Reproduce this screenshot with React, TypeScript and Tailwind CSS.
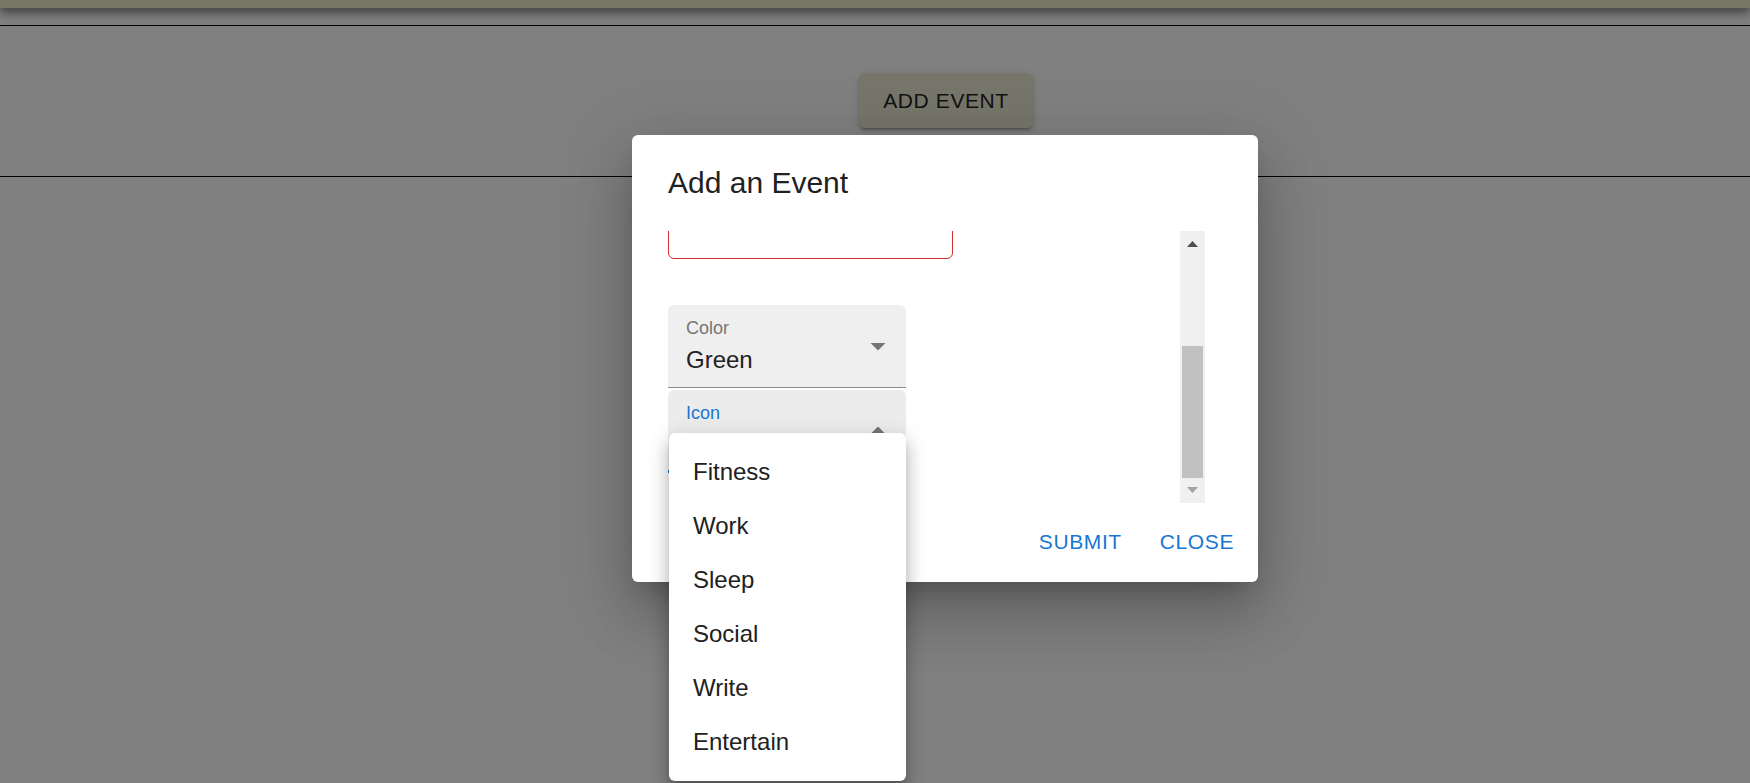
import type { ReactNode } from 'react'

const ICON_OPTIONS = ['Fitness', 'Work', 'Sleep', 'Social', 'Write', 'Entertain']

function Caret({ up = false }: { up?: boolean }) {
  return (
    <svg width="36" height="36" viewBox="0 0 24 24" className="text-[#757575]" aria-hidden="true">
      <path d={up ? 'M7 14l5-5 5 5z' : 'M7 10l5 5 5-5z'} fill="currentColor" />
    </svg>
  )
}

function FilledSelect({
  label,
  value,
  focused = false,
  children,
}: {
  label: string
  value?: string
  focused?: boolean
  children?: ReactNode
}) {
  return (
    <div
      className={`relative flex h-[83px] w-[238px] justify-between rounded-t-[6px] pl-[18px] pr-[10px] ${
        focused ? 'border-b-[3px] border-[#1976d2] bg-[#ececec]' : 'border-b border-[#8d8d8d] bg-[#efefef]'
      }`}
    >
      <div className="flex flex-col pt-[14px]">
        <span className={`text-[18px] leading-[18px] ${focused ? 'text-[#1976d2]' : 'text-[#757575]'}`}>
          {label}
        </span>
        {value && <span className="mt-[11px] text-[24px] leading-[24px] text-[#212121]">{value}</span>}
      </div>
      <div className="mt-[23px]">{children}</div>
    </div>
  )
}

function FakeScrollbar() {
  return (
    <div className="flex h-full w-[25px] flex-col items-center bg-[#f0f0f0]">
      <svg width="11" height="6" viewBox="0 0 11 6" className="mt-[10px]" aria-hidden="true">
        <path d="M0 6L5.5 0L11 6z" fill="#505050" />
      </svg>
      <div className="mt-[99px] h-[132px] w-[21px] bg-[#c1c1c1]" />
      <svg width="11" height="6" viewBox="0 0 11 6" className="mt-[9px]" aria-hidden="true">
        <path d="M0 0L11 0L5.5 6z" fill="#a3a3a3" />
      </svg>
    </div>
  )
}

export default function App() {
  return (
    <div
      className="relative h-[783px] w-full overflow-hidden bg-[#808080]"
      style={{ fontFamily: '"Liberation Sans", Arial, sans-serif' }}
    >
      {/* app bar + page behind the backdrop */}
      <div className="h-[8px] bg-[#767666] shadow-[0_3px_6px_-1px_rgba(0,0,0,0.35),0_6px_8px_0_rgba(0,0,0,0.25),0_2px_15px_0_rgba(0,0,0,0.2)]" />
      <div className="mt-[17px] h-px bg-black" />
      <div className="flex h-[150px] justify-center pl-[142px] pt-[47px]">
        <button className="h-[55px] w-[174px] rounded-[6px] bg-[#77766a] text-[21px] tracking-[0.6px] text-[#111] shadow-[0_4px_2px_-3px_rgba(0,0,0,0.2),0_3px_3px_0_rgba(0,0,0,0.14),0_2px_8px_0_rgba(0,0,0,0.12)]">
          ADD EVENT
        </button>
      </div>
      <div className="h-px bg-black" />

      {/* dialog */}
      <div className="absolute left-[632px] top-[135px] w-[626px] rounded-[6px] bg-white shadow-[0_16px_22px_-10px_rgba(0,0,0,0.2),0_36px_57px_4px_rgba(0,0,0,0.14),0_14px_69px_12px_rgba(0,0,0,0.12)]">
        <h2 className="px-[36px] pt-[24px] text-[30px] leading-[48px] text-[#212121]">Add an Event</h2>

        <div className="ml-[36px] mt-[24px] flex h-[272px] w-[537px]">
          <div className="flex-1 overflow-hidden">
            <div className="relative -mt-[56px] h-[84px] w-[285px] rounded-[6px] border-[1.5px] border-[#d32f2f]">
              <div className="absolute left-[238px] top-[54px] h-px w-[24px] bg-[#bdbdbd]" />
            </div>
            <div className="mt-[46px]">
              <FilledSelect label="Color" value="Green">
                <Caret />
              </FilledSelect>
            </div>
            <div className="mt-[2px]">
              <FilledSelect label="Icon" focused>
                <Caret up />
              </FilledSelect>
            </div>
          </div>
          <FakeScrollbar />
        </div>

        <div className="flex justify-end gap-[14px] p-[12px]">
          <button className="px-[12px] py-[9px] text-[21px] leading-[36.75px] tracking-[0.6px] text-[#1976d2]">
            SUBMIT
          </button>
          <button className="px-[12px] py-[9px] text-[21px] leading-[36.75px] tracking-[0.6px] text-[#1976d2]">
            CLOSE
          </button>
        </div>
      </div>

      {/* open select menu */}
      <ul className="absolute left-[669px] top-[433px] w-[237px] rounded-[6px] bg-white py-[12px] shadow-[0_8px_8px_-4px_rgba(0,0,0,0.2),0_12px_15px_2px_rgba(0,0,0,0.14),0_5px_21px_3px_rgba(0,0,0,0.12)]">
        {ICON_OPTIONS.map((opt) => (
          <li key={opt} className="px-[24px] py-[9px] text-[24px] leading-[36px] text-[#212121]">
            {opt}
          </li>
        ))}
      </ul>
    </div>
  )
}
